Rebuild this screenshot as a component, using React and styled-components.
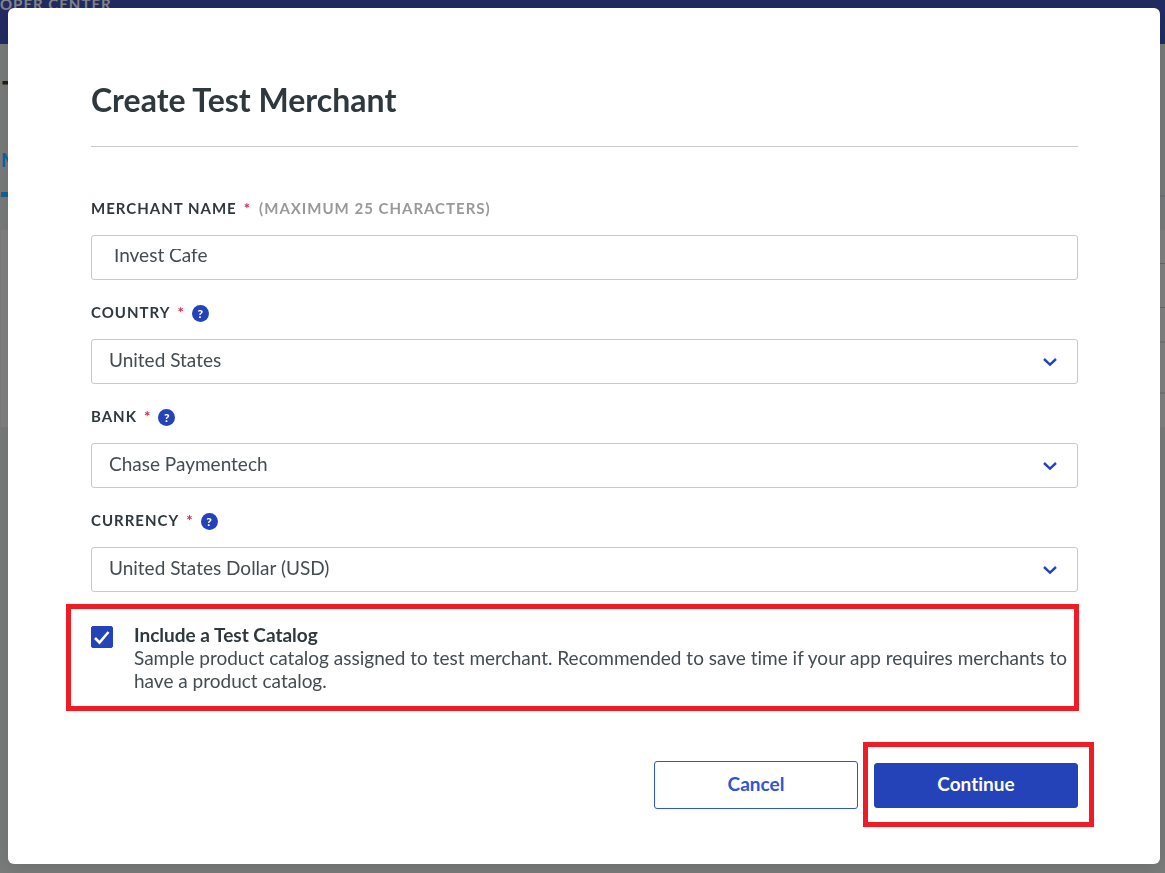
import React from "react";
import styled, { createGlobalStyle } from "styled-components";

const GlobalStyle = createGlobalStyle`
  *, *::before, *::after { box-sizing: border-box; }
  html, body { margin: 0; height: 100%; }
  body {
    overflow: hidden;
    background: #7a7c7b;
    color: #434c50;
    font-family: Lato, "Open Sans", sans-serif;
    font-size: 19px;
    font-variant-ligatures: none;
  }
  button, input, select { font: inherit; color: inherit; font-variant-ligatures: none; }
`;

const Backdrop = styled.div`
  min-height: 100vh;
  overflow: hidden;
`;

const SiteHeader = styled.header`
  height: 44px;
  background: #222c62;
  color: #85858f;
  font-size: 15px;
  font-weight: 700;
  line-height: 8px;
  letter-spacing: 1px;
`;

const PageTitle = styled.div`
  padding: 31px 2px 0;
  height: 102px;
  color: #1a1f21;
  font-size: 30px;
  font-weight: 700;
  line-height: 32px;
`;

const PageTabs = styled.div`
  display: flex;
  height: 51px;
  border-bottom: 2px solid #69747b;
`;

const PageTab = styled.div`
  height: 51px;
  margin-left: 1px;
  border-bottom: 5px solid #12639c;
  color: #12639c;
  font-weight: 700;
  line-height: 28px;
`;

const PagePanel = styled.div`
  margin: 33px 0 0 1px;
  padding: 33px 0 33px 20px;
  background: #828282;
`;

const PanelField = styled.div`
  height: 45px;
  border: 1px solid #666666;
  border-width: 1px 0;
`;

const PanelRow = styled.div`
  height: 53px;
  margin-top: 33px;
  border: 2px solid #6f777c;
  border-width: 2px 0;
`;

const Overlay = styled.div`
  position: fixed;
  inset: 0;
  display: flex;
  padding: 8px 5px 9px 8px;
`;

const Dialog = styled.form`
  flex: 1;
  padding: 75px 82px 0 83px;
  border-radius: 6px;
  background: #ffffff;
  box-shadow: 0 4px 20px rgba(0, 0, 0, 0.12);
`;

const Title = styled.h1`
  margin: 0 0 45px;
  padding-bottom: 29px;
  border-bottom: 1px solid #c9c9c9;
  color: #2f383c;
  font-size: 32px;
  font-weight: 700;
  line-height: 34px;
`;

const Field = styled.div`
  margin-bottom: 16px;
`;

const LabelRow = styled.div`
  display: flex;
  align-items: center;
  height: 32px;
  margin-bottom: 11px;
  padding-bottom: 1px;
  color: #2f383c;
  font-size: 15px;
  font-weight: 700;
  letter-spacing: 1px;
`;

const Required = styled.span`
  margin-left: 7px;
  color: #e0244b;
`;

const Hint = styled.span`
  margin-left: 8px;
  color: #999999;
`;

const HelpButton = styled.button`
  display: grid;
  place-items: center;
  width: 17px;
  height: 17px;
  margin: 3px 0 0 7px;
  padding: 0;
  border: 0;
  border-radius: 50%;
  background: #2443b8;
  color: #ffffff;
  font-size: 12px;
  font-weight: 900;
  line-height: 17px;
`;

const Control = styled.div`
  display: grid;
  align-items: center;
  height: 45px;
  border: 1px solid #c9c9c9;
  border-radius: 3px;
  background: #ffffff;
`;

const TextInput = styled.input`
  grid-area: 1 / 1;
  width: 100%;
  height: 43px;
  padding: 0 22px 7px;
  border: 0;
  background: none;
  outline: 0;
  clip-path: inset(13px 0 0 0);
`;

const Select = styled.select`
  grid-area: 1 / 1;
  width: 100%;
  height: 43px;
  padding: 0 50px 5px 17px;
  border: 0;
  background: none;
  outline: 0;
  appearance: none;
`;

const Chevron = styled.svg`
  grid-area: 1 / 1;
  justify-self: end;
  width: 14px;
  height: 10px;
  margin-right: 20px;
  pointer-events: none;
`;

const Highlight = styled.div`
  position: absolute;
  inset: ${(p) => p.$inset};
  border: 5px solid #ee1c24;
  pointer-events: none;
`;

const CatalogOption = styled.div`
  position: relative;
  display: flex;
  margin-top: 31px;
`;

const TickBox = styled.span`
  display: grid;
  width: 22px;
  height: 22px;
  margin: 3px 21px 0 0;
`;

const TickInput = styled.input`
  grid-area: 1 / 1;
  width: 22px;
  height: 22px;
  margin: 0;
  border: 1px solid #2443b8;
  border-radius: 2px;
  appearance: none;
  &:checked { background: #2443b8; }
  &:not(:checked) + svg { visibility: hidden; }
`;

const TickMark = styled.svg`
  grid-area: 1 / 1;
  pointer-events: none;
`;

const OptionText = styled.div`
  flex: 1;
  line-height: 23px;
`;

const OptionLabel = styled.label`
  display: block;
  color: #2f383c;
  font-weight: 700;
`;

const OptionNote = styled.p`
  margin: 0;
`;

const Actions = styled.div`
  display: flex;
  align-items: center;
  justify-content: flex-end;
  gap: 16px;
  margin-top: 69px;
`;

const ActionSlot = styled.div`
  position: relative;
  width: 204px;
`;

const ActionButton = styled.button`
  display: block;
  width: 100%;
  height: ${(p) => (p.$primary ? 45 : 48)}px;
  padding: 0 0 3px;
  border: 1px solid ${(p) => (p.$primary ? "#2443b8" : "#3054d6")};
  border-radius: 3px;
  background: ${(p) => (p.$primary ? "#2443b8" : "#ffffff")};
  color: ${(p) => (p.$primary ? "#ffffff" : "#3054d6")};
  font-weight: 700;
`;

function SelectField({ id, label, value }) {
  return (
    <Field>
      <LabelRow>
        <label htmlFor={id}>{label}</label>
        <Required>*</Required>
        <HelpButton type="button">?</HelpButton>
      </LabelRow>
      <Control>
        <Select id={id} defaultValue={value}>
          <option>{value}</option>
        </Select>
        <Chevron viewBox="0 0 14 10" fill="none" stroke="#2443b8" strokeWidth="2.4">
          <path d="M1 2l6 5.6L13 2" />
        </Chevron>
      </Control>
    </Field>
  );
}

export default function App() {
  return (
    <>
      <GlobalStyle />
      <Backdrop>
        <SiteHeader>OPER CENTER</SiteHeader>
        <PageTitle>T</PageTitle>
        <PageTabs>
          <PageTab>M</PageTab>
        </PageTabs>
        <PagePanel>
          <PanelField />
          <PanelRow />
        </PagePanel>
      </Backdrop>
      <Overlay>
        <Dialog role="dialog" aria-labelledby="dialog-title">
          <Title id="dialog-title">Create Test Merchant</Title>
          <Field>
            <LabelRow>
              <label htmlFor="merchant-name">MERCHANT NAME</label>
              <Required>*</Required>
              <Hint>(MAXIMUM 25 CHARACTERS)</Hint>
            </LabelRow>
            <Control>
              <TextInput id="merchant-name" type="text" maxLength={25} defaultValue="Invest Cafe" />
            </Control>
          </Field>
          <SelectField id="country" label="COUNTRY" value="United States" />
          <SelectField id="bank" label="BANK" value="Chase Paymentech" />
          <SelectField id="currency" label="CURRENCY" value="United States Dollar (USD)" />
          <CatalogOption>
            <TickBox>
              <TickInput id="test-catalog" type="checkbox" defaultChecked aria-describedby="catalog-note" />
              <TickMark viewBox="0 0 22 22" fill="none" stroke="#ffffff" strokeWidth="2.6">
                <path d="M4 12l4.500 4.500L17.500 6" />
              </TickMark>
            </TickBox>
            <OptionText>
              <OptionLabel htmlFor="test-catalog">Include a Test Catalog</OptionLabel>
              <OptionNote id="catalog-note">
                Sample product catalog assigned to test merchant. Recommended to save time if your app
                requires merchants to have a product catalog.
              </OptionNote>
            </OptionText>
            <Highlight $inset="-19px -1px -19px -25px" />
          </CatalogOption>
          <Actions>
            <ActionSlot>
              <ActionButton type="button">Cancel</ActionButton>
            </ActionSlot>
            <ActionSlot>
              <ActionButton type="submit" $primary>Continue</ActionButton>
              <Highlight $inset="-21px -16px -19px -11px" />
            </ActionSlot>
          </Actions>
        </Dialog>
      </Overlay>
    </>
  );
}
